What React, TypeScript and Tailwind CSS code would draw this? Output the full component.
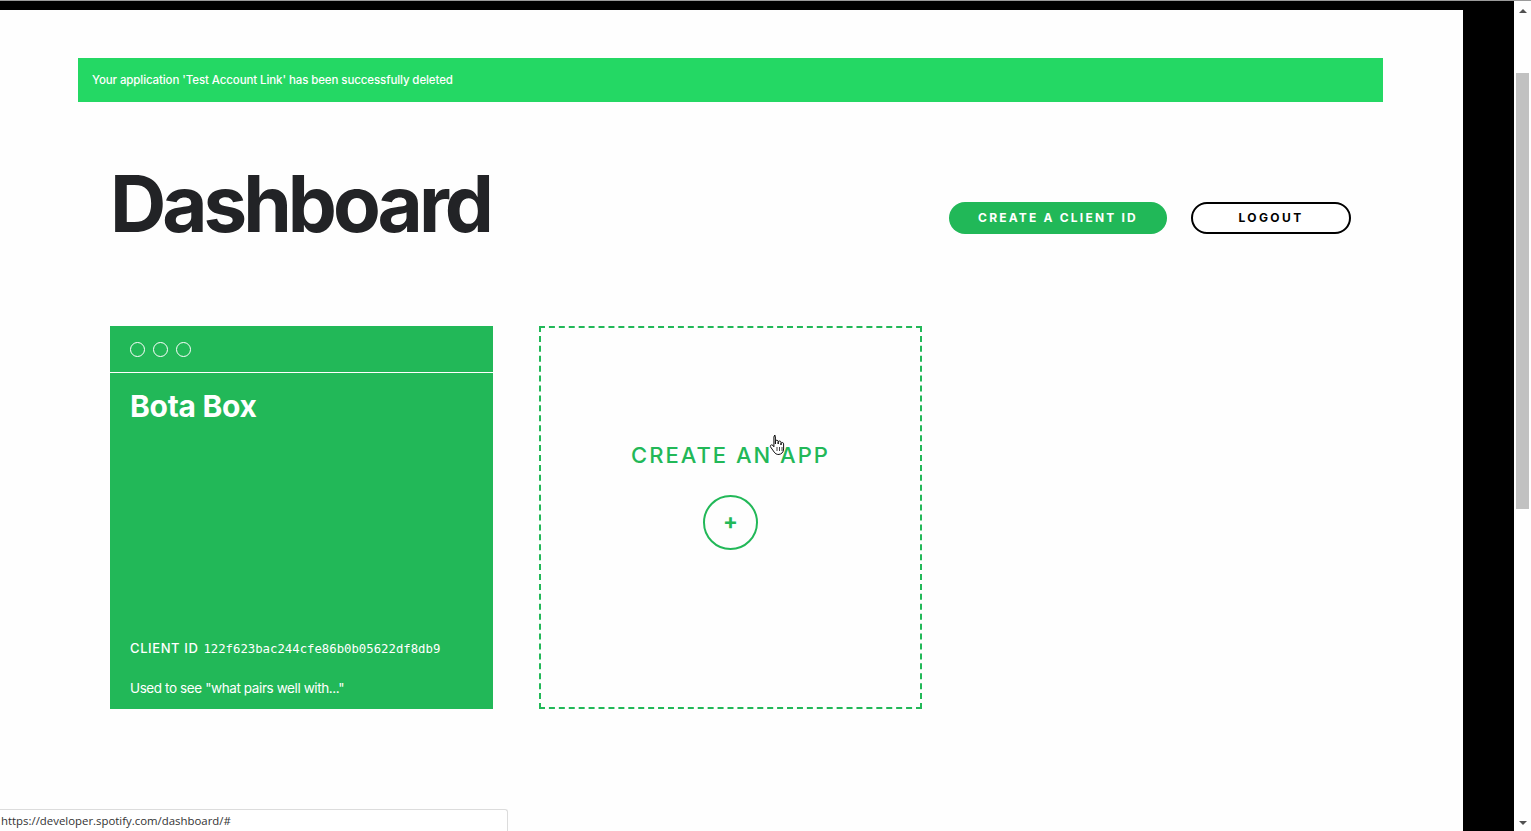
import React from "react";

const font = { fontFamily: "Inter, 'Noto Sans', sans-serif" };

function HandCursor() {
  return (
    <svg
      width="16"
      height="22"
      viewBox="0 0 16 22"
      className="absolute left-[769px] top-[424px]"
    >
      <path
        d="M5 1.5c.8 0 1.4.6 1.4 1.4V10V7.6c0-.8.6-1.4 1.4-1.4s1.4.6 1.4 1.4V10V8.4c0-.8.6-1.4 1.4-1.4s1.4.6 1.4 1.4V11v-1.2c0-.8.6-1.3 1.3-1.3s1.3.6 1.3 1.3V15c0 3.2-2.2 5.5-5.4 5.5H9.6c-2 0-3.300-.9-4.4-2.4L1.6 13c-.5-.7-.3-1.5.3-1.9.6-.4 1.4-.3 1.9.3l-.2-.2 1.3 1.6V2.9c0-.8.6-1.4 1.4-1.4z"
        fill="#fff"
        stroke="#111"
        strokeWidth="1"
        strokeLinejoin="round"
      />
      <path d="M8 13v4M10.5 13v4M13 13v4" stroke="#111" strokeWidth="0.8" />
    </svg>
  );
}

export default function App() {
  return (
    <div className="w-[1531px] h-[831px] flex flex-col overflow-hidden bg-black">
      <div className="h-px bg-[#9a9a9a]" />
      <div className="flex-1 flex">
        <div className="flex-1 flex flex-col pt-[9px] pr-[51px]">
          <div className="relative flex-1 bg-[#fefefe]" style={font}>
            {/* flash message */}
            <div className="mx-[78px] mt-[48px] w-[1305px] h-[44px] bg-[#24d864] flex items-center pl-[14px] pt-px">
              <span className="text-white text-[11.5px] font-medium tracking-[-0.1px]">
                Your application 'Test Account Link' has been successfully deleted
              </span>
            </div>

            {/* heading row */}
            <div className="flex items-center mt-[58px] pl-[110px] pr-[112px]">
              <h1 className="text-[#222326] text-[78px] font-bold tracking-[-4px] leading-none h-[96px] flex items-center pb-[8px]">
                Dashboard
              </h1>
              <div className="ml-auto flex gap-[24px] mt-[20px]">
                <button className="w-[218px] h-[32px] rounded-full bg-[#21b858] text-white text-[12px] font-bold tracking-[2.2px] uppercase">
                  Create a client ID
                </button>
                <button className="w-[160px] h-[32px] rounded-full border-2 border-black bg-white text-black text-[12px] font-bold tracking-[2.4px] uppercase">
                  Logout
                </button>
              </div>
            </div>

            {/* apps */}
            <div className="flex gap-[46px] pl-[110px] mt-[70px]">
              <div className="w-[383px] h-[383px] bg-[#22b858] flex flex-col text-white">
                <div className="h-[47px] border-b border-white flex items-center gap-[8px] pl-[20px]">
                  <span className="w-[15px] h-[15px] rounded-full border border-white" />
                  <span className="w-[15px] h-[15px] rounded-full border border-white" />
                  <span className="w-[15px] h-[15px] rounded-full border border-white" />
                </div>
                <div className="flex-1 flex flex-col px-[20px] pt-[16px] pb-[11px]">
                  <div className="text-[30px] font-bold tracking-[-0.3px] leading-[34px]">
                    Bota Box
                  </div>
                  <div className="mt-auto flex items-baseline gap-[5px]">
                    <span className="text-[13px] font-medium tracking-[0.6px]">CLIENT ID</span>
                    <span className="text-[12.3px]" style={{ fontFamily: "'DejaVu Sans Mono', monospace" }}>
                      122f623bac244cfe86b0b05622df8db9
                    </span>
                  </div>
                  <div className="mt-[19px] text-[13.5px] tracking-[-0.4px]">
                    Used to see "what pairs well with..."
                  </div>
                </div>
              </div>

              <div className="w-[383px] h-[383px] border-2 border-dashed border-[#22b858] flex flex-col items-center pt-[116px]">
                <div className="text-[#22b858] text-[22px] font-medium tracking-[2px] leading-none">
                  CREATE AN APP
                </div>
                <div className="mt-[29px] w-[55px] h-[55px] rounded-full border-2 border-[#22b858] flex items-center justify-center text-[#22b858] text-[22px] font-bold leading-none pb-[3px]">
                  +
                </div>
              </div>
            </div>

            <HandCursor />

            {/* status bar */}
            <div className="absolute left-0 bottom-0 w-[508px] h-[22px] border-t border-r border-[#dcdcdc] rounded-tr-[3px] bg-white flex items-center pl-[1px]">
              <span className="text-[11.4px] text-[#333]" style={{ fontFamily: "'Open Sans', sans-serif" }}>
                https://developer.spotify.com/dashboard/#
              </span>
            </div>
          </div>
        </div>

        {/* scrollbar */}
        <div className="w-[17px] bg-[#fefefe] flex flex-col items-center relative">
          <div className="mt-[8px] w-0 h-0 border-l-[4px] border-r-[4px] border-b-[4px] border-l-transparent border-r-transparent border-b-[#505050]" />
          <div className="absolute left-[2px] top-[72px] w-[13px] h-[436px] bg-[#c1c1c1]" />
          <div className="mt-auto mb-[6px] w-0 h-0 border-l-[4px] border-r-[4px] border-t-[4px] border-l-transparent border-r-transparent border-t-[#505050]" />
        </div>
      </div>
    </div>
  );
}
